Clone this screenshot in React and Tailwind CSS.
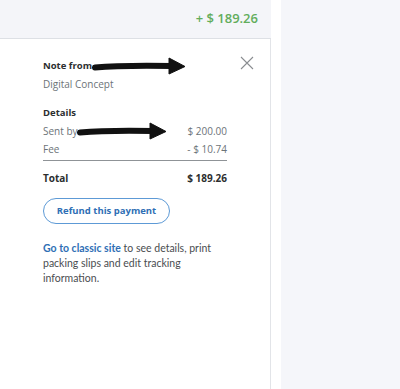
import React from "react";

const Arrow = ({ className, w }) => (
  <svg className={className} width={w} height="18" viewBox={`0 0 ${w} 18`}>
    <path d={`M3 10.5 C 25 8.5, 50 8.5, ${w - 14} 9`} stroke="#111" strokeWidth="6" strokeLinecap="round" fill="none" />
    <path d={`M${w - 17} 1 L${w - 1} 9.5 L${w - 17} 17 Z`} fill="#111" strokeLinejoin="round" stroke="#111" strokeWidth="1" />
  </svg>
);

export default function App() {
  return (
    <div className="w-[400px] h-[389px] flex bg-white overflow-hidden" style={{ fontFamily: "'Open Sans', sans-serif" }}>
      <div className="w-[271px] flex flex-col">
        <div className="h-[39px] bg-[#f4f5f9] border-b border-[#dde0e5] flex justify-end pr-[13px]">
          <span className="text-[13px] font-semibold text-[#62ad5c] leading-[36px]">+ $ 189.26</span>
        </div>
        <div className="flex-1 bg-white border-r border-[#e2e4e8] relative px-[43px] pt-[18px]">
          <button className="absolute right-[16px] top-[17px]">
            <svg width="14" height="14" viewBox="0 0 14 14">
              <path d="M1 1 L13 13 M13 1 L1 13" stroke="#8a8d91" strokeWidth="1.1" />
            </svg>
          </button>
          <div className="relative h-[18px] leading-[18px] text-[9.5px] font-bold text-[#2c2e2f]">
            Note from
            <Arrow className="absolute left-[49px] top-0" w={94} />
          </div>
          <div className="h-[18px] leading-[18px] text-[10px] text-[#6c7378]">Digital Concept</div>

          <div className="mt-[11px] h-[18px] leading-[18px] text-[9.5px] font-bold text-[#2c2e2f]">Details</div>
          <div className="relative h-[18px] leading-[18px] text-[10px] text-[#6c7378] flex justify-between">
            <span>Sent by</span>
            <span>$ 200.00</span>
            <Arrow className="absolute left-[34px] top-0" w={90} />
          </div>
          <div className="h-[18px] leading-[18px] text-[10px] text-[#6c7378] flex justify-between">
            <span>Fee</span>
            <span>- $ 10.74</span>
          </div>
          <div className="mt-[2px] border-t border-[#8f9397]" />
          <div className="mt-[8px] h-[18px] leading-[18px] text-[10px] font-bold text-[#2c2e2f] flex justify-between">
            <span>Total</span>
            <span>$ 189.26</span>
          </div>

          <button className="mt-[11px] h-[26px] w-[127px] rounded-full border border-[#5d9ad6] text-[9.5px] font-bold text-[#2f6fb5]">
            Refund this payment
          </button>

          <p className="mt-[17px] w-[185px] text-[10.5px] leading-[15px] text-[#4a4d50]" style={{ fontFamily: "Lato, sans-serif" }}>
            <span className="font-bold text-[#2f6fb5]">Go to classic site</span> to see details, print packing slips and edit tracking information.
          </p>
        </div>
      </div>
      <div className="w-[10px] bg-white" />
      <div className="flex-1 bg-[#f5f6fa]" />
    </div>
  );
}
